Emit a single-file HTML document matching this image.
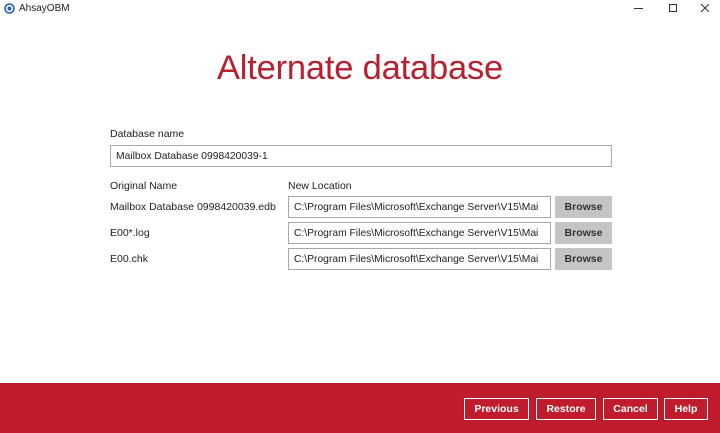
<!DOCTYPE html>
<html><head><style>
*{margin:0;padding:0;box-sizing:border-box}
body{width:720px;height:433px;background:#fff;font-family:"Liberation Sans",sans-serif;position:relative;overflow:hidden;color:#222}
.a{position:absolute}
.t{font-size:10.5px;white-space:nowrap}
.inp{position:absolute;border:1px solid #a8a8a8;background:#fff;font-size:10.3px;padding-left:5px;white-space:nowrap;overflow:hidden;display:flex;align-items:center;height:22px}
.br{position:absolute;background:#c4c4c4;font-size:10.5px;font-weight:bold;text-align:center;line-height:22px;width:57px;height:22px;color:#333}
.fb{position:absolute;top:398px;height:22px;border:1px solid #fff;outline:1px solid #b01a28;color:#fff;font-size:10.5px;font-weight:bold;text-align:center;line-height:20px}
</style></head><body>
<svg class="a" style="left:4px;top:3px" width="11" height="11"><circle cx="5.5" cy="5.5" r="4.5" fill="none" stroke="#1f5fa8" stroke-width="1.6"/><circle cx="5.5" cy="5.5" r="2" fill="#1f5fa8"/></svg>
<div class="a t" style="left:19px;top:3px;font-size:10px">AhsayOBM</div>
<div class="a" style="left:634px;top:8px;width:9px;height:1px;background:#333"></div>
<div class="a" style="left:669px;top:4px;width:8px;height:8px;border:1px solid #333"></div>
<svg class="a" style="left:700px;top:3px" width="10" height="10"><path d="M1 1L9 9M9 1L1 9" stroke="#333" stroke-width="1"/></svg>
<div class="a" style="left:0;width:720px;top:49px;text-align:center;font-size:34.5px;color:#b8202f;letter-spacing:-0.2px">Alternate database</div>
<div class="a t" style="left:110px;top:128px">Database name</div>
<div class="inp" style="left:110px;top:145px;width:502px">Mailbox Database 0998420039-1</div>
<div class="a t" style="left:110px;top:180px">Original Name</div>
<div class="a t" style="left:288px;top:180px">New Location</div>
<div class="a t" style="left:110px;top:201px">Mailbox Database 0998420039.edb</div>
<div class="a t" style="left:110px;top:227px">E00*.log</div>
<div class="a t" style="left:110px;top:253px">E00.chk</div>
<div class="inp" style="left:288px;top:196px;width:263px">C:\Program Files\Microsoft\Exchange Server\V15\Mai</div>
<div class="inp" style="left:288px;top:222px;width:263px">C:\Program Files\Microsoft\Exchange Server\V15\Mai</div>
<div class="inp" style="left:288px;top:248px;width:263px">C:\Program Files\Microsoft\Exchange Server\V15\Mai</div>
<div class="br" style="left:555px;top:196px">Browse</div>
<div class="br" style="left:555px;top:222px">Browse</div>
<div class="br" style="left:555px;top:248px">Browse</div>
<div class="a" style="left:0;top:383px;width:720px;height:50px;background:#c01c2d"></div>
<div class="fb" style="left:464px;width:65px">Previous</div>
<div class="fb" style="left:536px;width:60px">Restore</div>
<div class="fb" style="left:603px;width:55px">Cancel</div>
<div class="fb" style="left:664px;width:44px">Help</div>
</body></html>
